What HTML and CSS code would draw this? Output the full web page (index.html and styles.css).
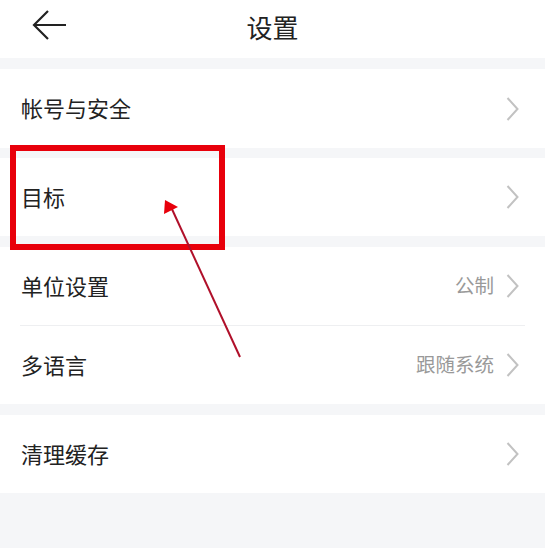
FILE: index.html
```html
<!DOCTYPE html>
<html lang="zh-CN">
<head>
    <meta charset="UTF-8">
    <meta name="viewport" content="width=device-width, initial-scale=1.0">
    <title>设置</title>
    <link rel="stylesheet" href="styles.css">
</head>
<body>
    <div class="page">
        <!-- 顶部标题栏 -->
        <div class="header">
            <svg class="back" width="36" height="32" viewBox="0 0 36 32">
                <path d="M16 2 L2 16 L16 30 M2 16 L34 16" fill="none" stroke="#222" stroke-width="2.2"/>
            </svg>
            <div class="title">设置</div>
        </div>

        <div class="group">
            <div class="row tall">
                <span class="label">帐号与安全</span>
                <svg class="chevron" width="13" height="24" viewBox="0 0 13 24"><polyline points="1.5,1 11.5,12 1.5,23" fill="none" stroke="#c2c2c2" stroke-width="2"/></svg>
            </div>
        </div>

        <div class="group group-goal">
            <div class="row">
                <span class="label">目标</span>
                <svg class="chevron" width="13" height="24" viewBox="0 0 13 24"><polyline points="1.5,1 11.5,12 1.5,23" fill="none" stroke="#c2c2c2" stroke-width="2"/></svg>
            </div>
        </div>

        <div class="group group-mid">
            <div class="row line">
                <span class="label">单位设置</span>
                <span class="value">公制</span>
                <svg class="chevron" width="13" height="24" viewBox="0 0 13 24"><polyline points="1.5,1 11.5,12 1.5,23" fill="none" stroke="#c2c2c2" stroke-width="2"/></svg>
            </div>
            <div class="row">
                <span class="label">多语言</span>
                <span class="value">跟随系统</span>
                <svg class="chevron" width="13" height="24" viewBox="0 0 13 24"><polyline points="1.5,1 11.5,12 1.5,23" fill="none" stroke="#c2c2c2" stroke-width="2"/></svg>
            </div>
        </div>

        <div class="group">
            <div class="row">
                <span class="label">清理缓存</span>
                <svg class="chevron" width="13" height="24" viewBox="0 0 13 24"><polyline points="1.5,1 11.5,12 1.5,23" fill="none" stroke="#c2c2c2" stroke-width="2"/></svg>
            </div>
        </div>

        <!-- 标注：红框和箭头 -->
        <div class="mark-box"></div>
        <svg class="mark-arrow" width="545" height="548" viewBox="0 0 545 548">
            <line x1="240" y1="357" x2="171" y2="207" stroke="#b0102a" stroke-width="2"/>
            <polygon points="165,200 178,207 164,214" fill="#e8000b"/>
        </svg>
    </div>
</body>
</html>
```

FILE: styles.css
```css
* {
    box-sizing: border-box;
}

html, body {
    margin: 0;
    padding: 0;
    background: #f5f6f8;
}

.page {
    width: 545px;
    height: 548px;
    position: relative;
    overflow: hidden;
    font-family: "Noto Sans CJK SC", "Noto Sans", sans-serif;
    color: #222;
}

/* 标题栏 */
.header {
    height: 58px;
    background: #fff;
    display: flex;
    align-items: center;
    justify-content: center;
    position: relative;
    margin-bottom: 11px;
}

.back {
    position: absolute;
    left: 32px;
    top: 9px;
}

.title {
    font-size: 26px;
    line-height: 1;
    margin-top: -4px;
}

/* 分组 */
.group {
    background: #fff;
    margin-bottom: 10px;
}

.group-goal,
.group-mid {
    margin-bottom: 11px;
}

.row {
    height: 78px;
    display: flex;
    align-items: center;
    padding: 0 26px 0 21px;
}

.row.tall {
    height: 79px;
}

.row.line {
    height: 79px;
    border-bottom: 1px solid #eeeff1;
    margin: 0 20px;
    padding: 0 6px 0 1px;
}

.label {
    font-size: 22px;
    line-height: 1;
    flex: 1;
    margin-top: -3px;
}

.value {
    font-size: 19.5px;
    line-height: 1;
    color: #999;
    margin-right: 12px;
    margin-top: -3px;
}

.chevron {
    display: block;
}

/* 标注 */
.mark-box {
    position: absolute;
    left: 10px;
    top: 145px;
    width: 215px;
    height: 105px;
    border: 6px solid #e8000b;
}

.mark-arrow {
    position: absolute;
    left: 0;
    top: 0;
}
```
